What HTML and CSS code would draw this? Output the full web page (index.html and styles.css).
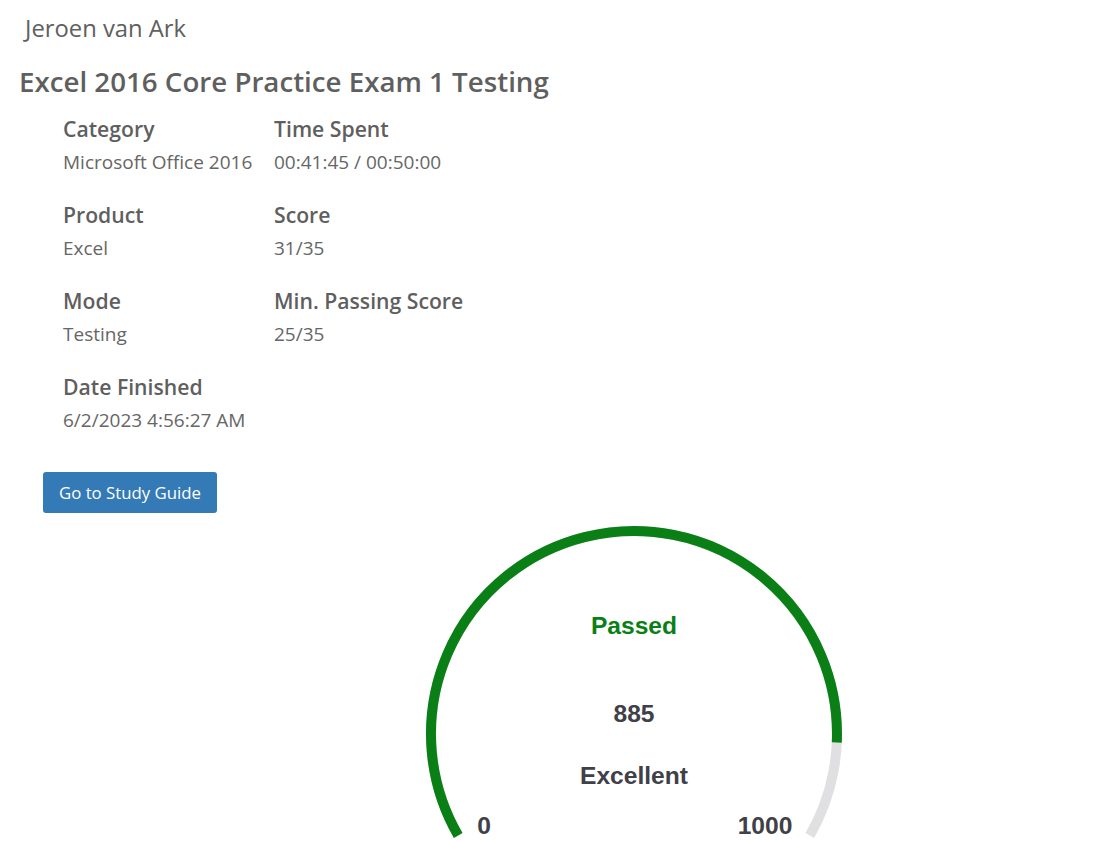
FILE: index.html
```html
<!DOCTYPE html>
<html>
<head>
<meta charset="utf-8">
<link rel="stylesheet" href="styles.css">
</head>
<body>
<div class="user">Jeroen van Ark</div>
<h1 class="title">Excel 2016 Core Practice Exam 1 Testing</h1>
<div class="details">
  <div class="item"><div class="label">Category</div><div class="value">Microsoft Office 2016</div></div>
  <div class="item"><div class="label">Time Spent</div><div class="value">00:41:45 / 00:50:00</div></div>
  <div class="item"><div class="label">Product</div><div class="value">Excel</div></div>
  <div class="item"><div class="label">Score</div><div class="value">31/35</div></div>
  <div class="item"><div class="label">Mode</div><div class="value">Testing</div></div>
  <div class="item"><div class="label">Min. Passing Score</div><div class="value">25/35</div></div>
  <div class="item"><div class="label">Date Finished</div><div class="value">6/2/2023 4:56:27 AM</div></div>
</div>
<button class="btn">Go to Study Guide</button>
<div class="gauge-wrap">
  <svg class="gauge" width="440" height="330" viewBox="0 0 440 330">
    <path d="M 44.2 321.5 A 203 203 0 1 1 395.8 321.5" fill="none" stroke="#e0e0e2" stroke-width="10"/>
    <path d="M 44.2 321.5 A 203 203 0 1 1 422.8 228.5" fill="none" stroke="#0a7f16" stroke-width="10"/>
    <text x="220" y="120" class="g-status">Passed</text>
    <text x="220" y="208" class="g-text">885</text>
    <text x="220" y="270" class="g-text">Excellent</text>
    <text x="70" y="320" class="g-text">0</text>
    <text x="351" y="320" class="g-text">1000</text>
  </svg>
</div>
</body>
</html>
```

FILE: styles.css
```css
html, body {
  margin: 0;
  padding: 0;
  background: #ffffff;
}
body {
  font-family: "Open Sans", "Noto Sans", sans-serif;
  color: #5f5f5f;
  overflow: hidden;
}
.user {
  padding: 10px 0 0 25px;
  font-size: 23.8px;
  line-height: 36px;
  font-weight: 400;
  color: #606060;
}
.title {
  margin: 0;
  padding: 15px 0 0 19px;
  font-size: 27.7px;
  line-height: 40px;
  font-weight: 600;
  color: #5f5f5f;
}
.details {
  display: grid;
  grid-template-columns: 211px auto;
  padding: 12px 0 0 63px;
  row-gap: 20px;
  width: 500px;
}
.label {
  font-size: 21.2px;
  line-height: 32px;
  font-weight: 600;
  color: #5f5f5f;
}
.value {
  font-size: 19px;
  line-height: 34px;
  font-weight: 400;
  color: #666666;
}
.btn {
  display: block;
  margin: 35px 0 0 43px;
  width: 174px;
  height: 41px;
  border: none;
  border-radius: 3px;
  background: #337ab7;
  color: #ffffff;
  font-family: "Open Sans", "Noto Sans", sans-serif;
  font-size: 16.8px;
  padding: 0;
}
.gauge-wrap {
  padding: 1px 0 0 414px;
}
.gauge {
  display: block;
}
.gauge text {
  font-family: "Liberation Sans", Arial, sans-serif;
  font-weight: 700;
  font-size: 24.6px;
  text-anchor: middle;
}
.g-status {
  fill: #0a7f16;
}
.g-text {
  fill: #404048;
}
```
